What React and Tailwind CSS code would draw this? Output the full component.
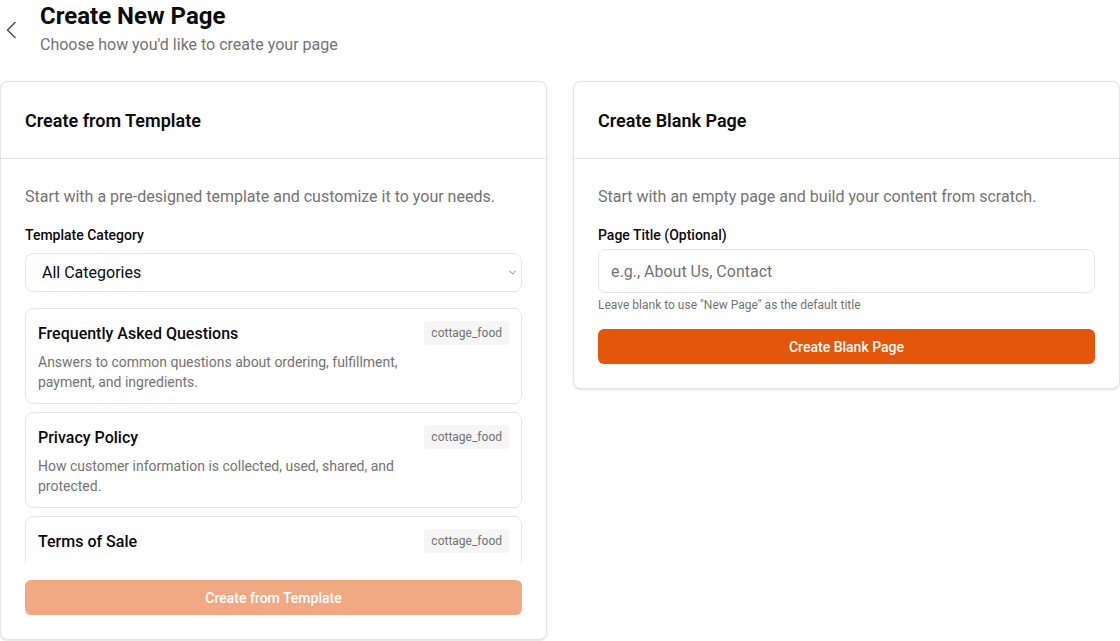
import { ChevronDown } from "lucide-react";

const templates = [
  {
    title: "Frequently Asked Questions",
    desc: "Answers to common questions about ordering, fulfillment, payment, and ingredients.",
  },
  {
    title: "Privacy Policy",
    desc: "How customer information is collected, used, shared, and protected.",
  },
  {
    title: "Terms of Sale",
    desc: "Terms for cottage food orders, payment, fulfillment, allergens, and refunds.",
  },
];

function TemplateItem({ title, desc }) {
  return (
    <div className="rounded-lg border border-neutral-200 bg-white px-3 pt-3 pb-[11px]">
      <div className="flex items-start justify-between gap-4">
        <div className="max-w-[380px]">
          <p className="mt-[1px] text-base font-medium text-neutral-950">{title}</p>
          <p className="mt-[6px] text-sm leading-5 text-neutral-500">{desc}</p>
        </div>
        <span className="shrink-0 rounded bg-neutral-100 px-[7px] py-[5px] text-xs leading-[14px] text-neutral-500">cottage_food</span>
      </div>
    </div>
  );
}

export default function App() {
  return (
    <div className="min-h-screen bg-white font-['Roboto',sans-serif] text-neutral-950">
      <div className="flex items-start gap-[23px] pl-[5px] pt-[2px]">
        <svg className="mt-[19px] shrink-0" width="12" height="18" viewBox="0 0 12 18" fill="none">
          <path d="M10 1.5 2.5 9l7.5 7.5" stroke="#525252" strokeWidth="1.6" strokeLinecap="round" strokeLinejoin="round" />
        </svg>
        <div>
          <h1 className="text-2xl font-bold leading-7">Create New Page</h1>
          <p className="mt-[3px] text-base text-neutral-500">Choose how you'd like to create your page</p>
        </div>
      </div>

      <div className="mt-[24px] grid grid-cols-2 items-start gap-[26px]">
        <div className="rounded-lg border border-neutral-200 bg-white shadow-sm">
          <div className="flex h-[77px] items-center border-b border-neutral-200 px-6 pt-[2px]">
            <h2 className="text-lg font-semibold">Create from Template</h2>
          </div>
          <div className="px-6 pt-[26px] pb-6">
            <p className="text-base text-neutral-500">Start with a pre-designed template and customize it to your needs.</p>
            <label className="mt-[16px] block text-sm font-medium">Template Category</label>
            <div className="relative mt-2">
              <select className="h-[39px] w-full appearance-none rounded-lg border border-neutral-200 bg-white px-4 text-base text-neutral-950 outline-none">
                <option>All Categories</option>
              </select>
              <ChevronDown className="pointer-events-none absolute right-[4px] top-[14px] h-[11px] w-[11px] text-neutral-700" strokeWidth={1.5} />
            </div>
            <div className="mt-4 flex h-[255px] flex-col gap-2 overflow-hidden">
              {templates.map((t) => (
                <TemplateItem key={t.title} {...t} />
              ))}
            </div>
            <button className="mt-[17px] h-[35px] w-full rounded-md bg-[#f0a983] text-sm font-medium text-white">
              Create from Template
            </button>
          </div>
        </div>

        <div className="rounded-lg border border-neutral-200 bg-white shadow-sm">
          <div className="flex h-[77px] items-center border-b border-neutral-200 px-6 pt-[2px]">
            <h2 className="text-lg font-semibold">Create Blank Page</h2>
          </div>
          <div className="px-6 pt-[26px] pb-6">
            <p className="text-base text-neutral-500">Start with an empty page and build your content from scratch.</p>
            <label className="mt-[16px] block text-sm font-medium">Page Title (Optional)</label>
            <input
              className="mt-[4px] h-[44px] w-full rounded-lg border border-neutral-200 px-3 text-base text-neutral-950 outline-none placeholder:text-neutral-500"
              placeholder="e.g., About Us, Contact"
            />
            <p className="mt-[4px] text-xs text-neutral-500">Leave blank to use "New Page" as the default title</p>
            <button className="mt-4 h-[35px] w-full rounded-md bg-[#e4560a] text-sm font-medium text-white">
              Create Blank Page
            </button>
          </div>
        </div>
      </div>
    </div>
  );
}
